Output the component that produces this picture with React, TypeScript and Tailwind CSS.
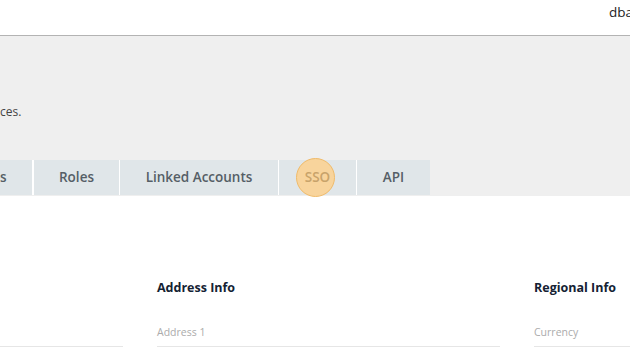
import React from "react";

export default function App() {
  const font = { fontFamily: '"Open Sans", "Liberation Sans", sans-serif' };
  return (
    <div className="w-[630px] h-[354px] overflow-hidden bg-white" style={font}>
      <div className="h-[36px] flex items-start justify-end border-b border-[#b3b3b3] bg-white">
        <span className="text-[13.5px] text-[#222] whitespace-nowrap mr-[-3px] mt-[2px]">dba</span>
      </div>
      <div className="bg-[#efefef] h-[160px] flex flex-col">
        <div className="h-[124px] flex flex-col pt-[69px]">
          <span className="text-[12px] text-[#444] leading-[14px]">ces.</span>
        </div>
        <div className="flex h-[35px]">
          <div className="w-[32px] bg-[#e0e6e9] flex items-center justify-start text-[13.5px] font-semibold text-[#555e66]">s</div>
          <div className="w-[2px] bg-white" />
          <div className="w-[85px] bg-[#e0e6e9] flex items-center justify-center text-[13.5px] font-semibold text-[#555e66]">Roles</div>
          <div className="w-[1px] bg-white" />
          <div className="w-[158px] bg-[#e0e6e9] flex items-center justify-center text-[13.5px] font-semibold text-[#555e66]">Linked Accounts</div>
          <div className="w-[1px] bg-white" />
          <div className="w-[77px] bg-[#e0e6e9] relative flex items-center justify-center text-[13.5px] font-semibold text-[#c8a36a]">
            <div className="absolute left-[17px] top-[-2px] w-[39px] h-[39px] rounded-full bg-[#f8d49c] border border-[#f0bb6a]" />
            <span className="relative">SSO</span>
          </div>
          <div className="w-[1px] bg-white" />
          <div className="w-[73px] bg-[#e0e6e9] flex items-center justify-center text-[13.5px] font-semibold text-[#555e66]">API</div>
        </div>
      </div>
      <div className="grid grid-cols-[123px_343px_1fr] gap-x-[34px] pt-[84px]">
        <div className="flex flex-col">
          <div className="h-[16px]" />
          <div className="mt-[28px] h-[16px]" />
          <div className="mt-[6px] h-[1px] bg-[#e6e6e6]" />
        </div>
        <div className="flex flex-col">
          <div className="h-[16px] text-[12.5px] font-bold text-[#142233] leading-[16px]">Address Info</div>
          <div className="mt-[28px] h-[16px] text-[10.5px] text-[#ababab] leading-[16px]">Address 1</div>
          <div className="mt-[6px] h-[1px] bg-[#e6e6e6]" />
        </div>
        <div className="flex flex-col">
          <div className="h-[16px] text-[12.5px] font-bold text-[#142233] leading-[16px] whitespace-nowrap">Regional Info</div>
          <div className="mt-[28px] h-[16px] text-[10.5px] text-[#ababab] leading-[16px]">Currency</div>
          <div className="mt-[6px] h-[1px] bg-[#e6e6e6]" />
        </div>
      </div>
    </div>
  );
}
